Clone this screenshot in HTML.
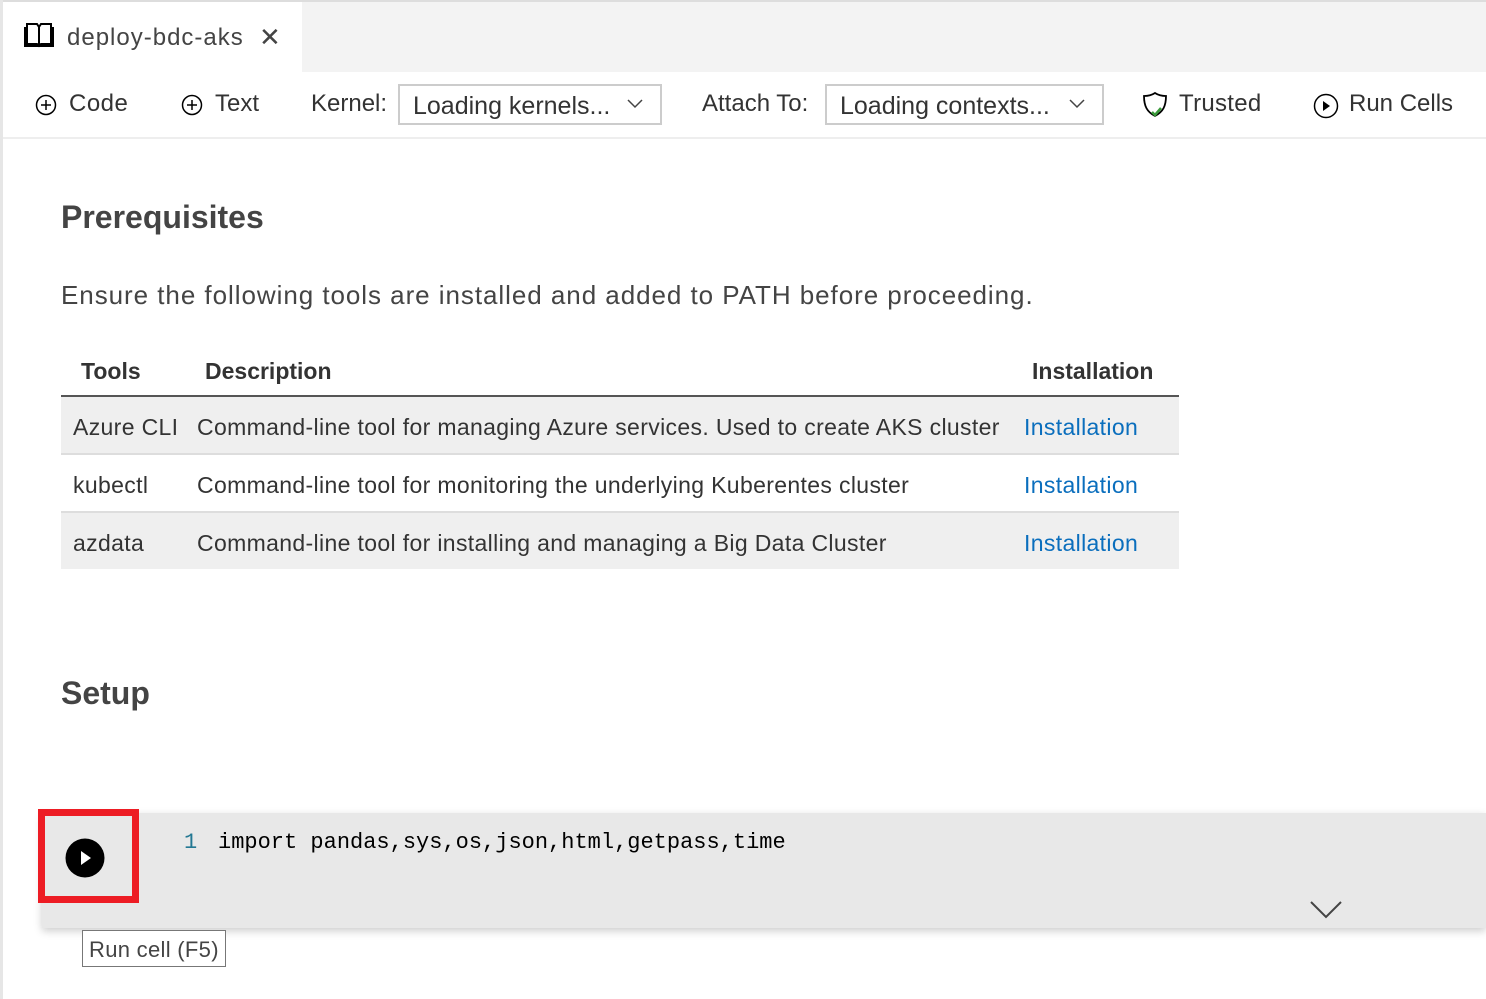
<!DOCTYPE html>
<html><head><style>
body{margin:0;width:1486px;height:999px;overflow:hidden;background:#fff;font-family:"Liberation Sans",sans-serif;color:#333;position:relative}
.a{position:absolute;white-space:nowrap}
.t{font-size:23px;letter-spacing:0.35px}
</style></head><body>
<div class="a" style="left:0;top:0;width:1486px;height:2px;background:#ddd"></div>
<div class="a" style="left:0;top:2px;width:1486px;height:70px;background:#f3f3f3"></div>
<div class="a" style="left:0;top:0;width:3px;height:999px;background:#e6e6e6"></div>
<div class="a" style="left:3px;top:2px;width:299px;height:70px;background:#fff"></div>
<svg class="a" style="left:24px;top:22px" width="30" height="26" viewBox="0 0 30 26"><path d="M3 2h10l2 3 2-3h10v20H17l-2 2-2-2H3z M15 5v19 M1 5v19h28V5" fill="none" stroke="#000" stroke-width="2"/></svg>
<div class="a" style="left:67px;top:24px;font-size:24px;color:#444;letter-spacing:1px">deploy-bdc-aks</div>
<div class="a" style="left:259px;top:22px;font-size:26px;color:#444">✕</div>
<div class="a" style="left:3px;top:137px;width:1483px;height:2px;background:#eee"></div>
<svg class="a" style="left:35px;top:94px" width="22" height="22"><circle cx="11" cy="11" r="9.5" fill="none" stroke="#000" stroke-width="1.5"/><path d="M11 6v10M6 11h10" stroke="#000" stroke-width="1.5"/></svg>
<div class="a" style="left:69px;top:90px;font-size:24px;letter-spacing:0.5px">Code</div>
<svg class="a" style="left:181px;top:94px" width="22" height="22"><circle cx="11" cy="11" r="9.5" fill="none" stroke="#000" stroke-width="1.5"/><path d="M11 6v10M6 11h10" stroke="#000" stroke-width="1.5"/></svg>
<div class="a" style="left:215px;top:90px;font-size:24px">Text</div>
<div class="a" style="left:311px;top:90px;font-size:24px">Kernel:</div>
<div class="a" style="left:398px;top:84px;width:260px;height:37px;border:2px solid #ccc"></div>
<div class="a" style="left:413px;top:92px;font-size:25px">Loading kernels...</div>
<svg class="a" style="left:626px;top:98px" width="18" height="12"><path d="M2 2l7 7 7-7" fill="none" stroke="#444" stroke-width="1.5"/></svg>
<div class="a" style="left:702px;top:90px;font-size:24px">Attach To:</div>
<div class="a" style="left:825px;top:84px;width:275px;height:37px;border:2px solid #ccc"></div>
<div class="a" style="left:840px;top:92px;font-size:25px">Loading contexts...</div>
<svg class="a" style="left:1068px;top:98px" width="18" height="12"><path d="M2 2l7 7 7-7" fill="none" stroke="#444" stroke-width="1.5"/></svg>
<svg class="a" style="left:1141px;top:90px" width="30" height="30"><path d="M14 3c-3 2-7 3-11 3 0 10 3 16 11 20 8-4 11-10 11-20-4 0-8-1-11-3z" fill="none" stroke="#000" stroke-width="1.8"/><path d="M11 22l3 3 6-7" fill="none" stroke="#3a9a3a" stroke-width="2.5"/></svg>
<div class="a" style="left:1179px;top:90px;font-size:24px;letter-spacing:0.3px">Trusted</div>
<svg class="a" style="left:1313px;top:93px" width="26" height="26"><circle cx="13" cy="13" r="11.5" fill="none" stroke="#000" stroke-width="1.5"/><path d="M10 8l7 5-7 5z" fill="#000"/></svg>
<div class="a" style="left:1349px;top:90px;font-size:24px">Run Cells</div>

<div class="a" style="left:61px;top:199px;font-size:32px;font-weight:bold;color:#444">Prerequisites</div>
<div class="a" style="left:61px;top:280px;font-size:26px;color:#444;letter-spacing:0.95px">Ensure the following tools are installed and added to PATH before proceeding.</div>
<div class="a" style="left:81px;top:358px;font-size:23px;font-weight:bold">Tools</div>
<div class="a" style="left:205px;top:358px;font-size:23px;font-weight:bold">Description</div>
<div class="a" style="left:1032px;top:358px;font-size:23px;font-weight:bold">Installation</div>
<div class="a" style="left:61px;top:395px;width:1118px;height:2px;background:#555"></div>
<div class="a" style="left:61px;top:397px;width:1118px;height:56px;background:#efefef"></div>
<div class="a" style="left:61px;top:453px;width:1118px;height:2px;background:#ddd"></div>
<div class="a" style="left:61px;top:511px;width:1118px;height:2px;background:#ddd"></div>
<div class="a" style="left:61px;top:513px;width:1118px;height:56px;background:#efefef"></div>
<div class="a t" style="left:73px;top:414px">Azure CLI</div>
<div class="a t" style="left:197px;top:414px">Command-line tool for managing Azure services. Used to create AKS cluster</div>
<div class="a t" style="left:1024px;top:414px;color:#0a6ebd">Installation</div>
<div class="a t" style="left:73px;top:472px">kubectl</div>
<div class="a t" style="left:197px;top:472px">Command-line tool for monitoring the underlying Kuberentes cluster</div>
<div class="a t" style="left:1024px;top:472px;color:#0a6ebd">Installation</div>
<div class="a t" style="left:73px;top:530px">azdata</div>
<div class="a t" style="left:197px;top:530px">Command-line tool for installing and managing a Big Data Cluster</div>
<div class="a t" style="left:1024px;top:530px;color:#0a6ebd">Installation</div>

<div class="a" style="left:61px;top:675px;font-size:32px;font-weight:bold;color:#444">Setup</div>

<div class="a" style="left:42px;top:813px;width:1444px;height:115px;background:#e8e8e8;box-shadow:0 3px 8px rgba(0,0,0,.2)"></div>
<div class="a" style="left:38px;top:809px;width:87px;height:80px;border:7px solid #ed1c24"></div>
<svg class="a" style="left:65px;top:838px" width="40" height="40"><circle cx="20" cy="20" r="19.5" fill="#000"/><path d="M16 13l10 7-10 7z" fill="#fff"/></svg>
<div class="a" style="left:184px;top:830px;font-size:22px;font-family:'Liberation Mono',monospace;color:#237893">1</div>
<div class="a" style="left:218px;top:830px;font-size:22px;font-family:'Liberation Mono',monospace;color:#000">import pandas,sys,os,json,html,getpass,time</div>
<svg class="a" style="left:1309px;top:900px" width="34" height="20"><path d="M2 2l15 15 15-15" fill="none" stroke="#444" stroke-width="2"/></svg>
<div class="a" style="left:82px;top:930px;width:142px;height:35px;border:1px solid #777;background:#fff"></div>
<div class="a" style="left:89px;top:937px;font-size:22px;color:#444;letter-spacing:0.3px">Run cell (F5)</div>
</body></html>
